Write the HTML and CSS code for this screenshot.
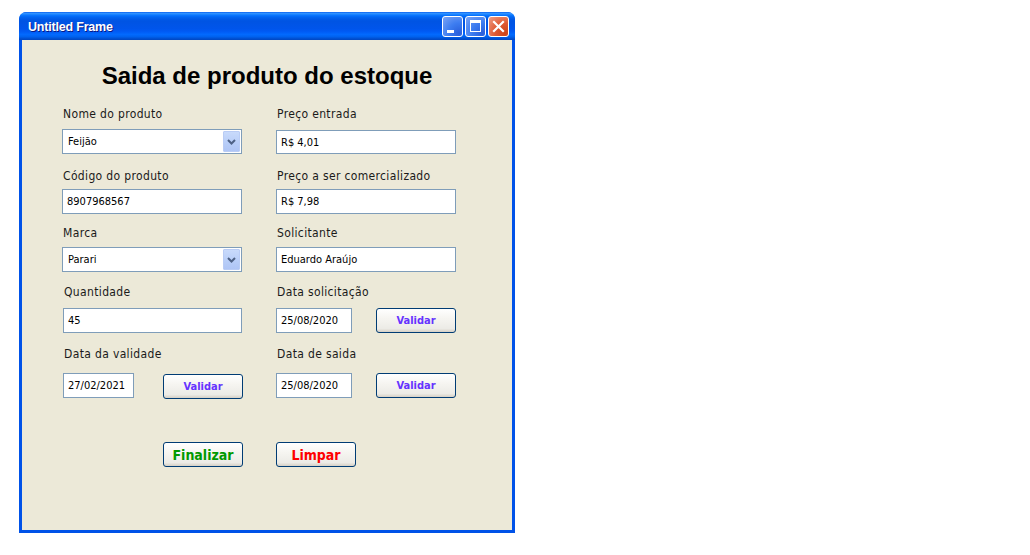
FILE: index.html
```html
<!DOCTYPE html>
<html lang="pt">
<head>
<meta charset="utf-8">
<title>Untitled Frame</title>
<link rel="stylesheet" href="styles.css">
</head>
<body>
<div class="window">
  <div class="titlebar">
    <span class="title">Untitled Frame</span>
    <div class="controls">
      <span class="ctl ctl-min"><svg width="19" height="19" viewBox="0 0 19 19"><rect x="4" y="13" width="7" height="3" fill="#fff"/></svg></span>
      <span class="ctl ctl-max"><svg width="19" height="19" viewBox="0 0 19 19"><rect x="4" y="3" width="11" height="3" fill="#fff"/><rect x="4.5" y="3.5" width="10" height="11" fill="none" stroke="#fff"/></svg></span>
      <span class="ctl ctl-close"><svg width="19" height="19" viewBox="0 0 19 19"><path d="M5 5 L14 14 M14 5 L5 14" stroke="#fff" stroke-width="2.2" stroke-linecap="square"/></svg></span>
    </div>
  </div>
  <div class="content">
    <h1 class="heading">Saida de produto do estoque</h1>
    <div class="form">
      <label class="lbl">Nome do produto</label>
      <label class="lbl">Preço entrada</label>
      <div class="combo"><span class="combo-text">Feijão</span><span class="combo-btn"><svg width="9" height="6" viewBox="0 0 9 6"><path d="M1 1 L4.5 4.5 L8 1" fill="none" stroke="#4D6185" stroke-width="2"/></svg></span></div>
      <div class="field field-r">R$ 4,01</div>

      <label class="lbl">Código do produto</label>
      <label class="lbl">Preço a ser comercializado</label>
      <div class="field">8907968567</div>
      <div class="field">R$ 7,98</div>

      <label class="lbl">Marca</label>
      <label class="lbl">Solicitante</label>
      <div class="combo"><span class="combo-text">Parari</span><span class="combo-btn"><svg width="9" height="6" viewBox="0 0 9 6"><path d="M1 1 L4.5 4.5 L8 1" fill="none" stroke="#4D6185" stroke-width="2"/></svg></span></div>
      <div class="field">Eduardo Araújo</div>

      <label class="lbl lbl-in">Quantidade</label>
      <label class="lbl">Data solicitação</label>
      <div class="field field-in">45</div>
      <div class="daterow">
        <div class="field date">25/08/2020</div>
        <button class="btn btn-validar">Validar</button>
      </div>

      <label class="lbl lbl-in">Data da validade</label>
      <label class="lbl">Data de saida</label>
      <div class="daterow daterow-l">
        <div class="field date date-l">27/02/2021</div>
        <button class="btn btn-validar">Validar</button>
      </div>
      <div class="daterow">
        <div class="field date">25/08/2020</div>
        <button class="btn btn-validar">Validar</button>
      </div>
    </div>
    <div class="actions">
      <button class="btn btn-big btn-finalizar">Finalizar</button>
      <button class="btn btn-big btn-limpar">Limpar</button>
    </div>
  </div>
</div>
</body>
</html>
```
FILE: styles.css
```css
* { box-sizing: border-box; }

body {
  margin: 0;
  background: #ffffff;
}

.window {
  margin: 12px 0 0 19px;
  width: 496px;
  height: 521px;
  background: #0052E8;
  border-radius: 8px 8px 0 0;
  display: flex;
  flex-direction: column;
}

.titlebar {
  flex: none;
  height: 28px;
  display: flex;
  align-items: center;
  padding: 1px 6px 0 9px;
  border-radius: 7px 7px 0 0;
  background: linear-gradient(to bottom,
    #0058EE 0%, #3593FF 4%, #288EFF 7%, #127DFF 10%, #036FFC 14%,
    #0262EE 20%, #0057E5 28%, #0054E3 34%, #0055EB 60%, #005BF5 70%,
    #026AFE 80%, #0062EF 88%, #0052D6 94%, #0046C0 100%);
}

.title {
  flex: 1;
  color: #ffffff;
  font-family: "Liberation Sans", Arial, sans-serif;
  font-weight: bold;
  font-size: 12.5px;
  letter-spacing: -0.2px;
  text-shadow: 1px 1px #0A1883;
}

.controls {
  display: flex;
  gap: 2px;
}

.ctl {
  width: 21px;
  height: 21px;
  border: 1px solid #ffffff;
  border-radius: 3px;
  display: block;
}

.ctl svg { display: block; }

.ctl-min, .ctl-max {
  background: radial-gradient(circle at 85% 85%, #2A5FDB 0%, #3C7CF0 45%, #7BA4F5 100%);
}

.ctl-close {
  background: radial-gradient(circle at 85% 85%, #CC4419 0%, #E05A33 45%, #EE9F88 100%);
}

.content {
  flex: 1;
  margin: 0 3px 3px;
  background: #ECE9D8;
  padding: 22px 0 0 40px;
}

.heading {
  margin: 0 0 0 -40px;
  text-align: center;
  font-family: "Liberation Sans", Arial, sans-serif;
  font-weight: bold;
  font-size: 24px;
  line-height: 28px;
  color: #000000;
}

.form {
  margin-top: 17px;
  display: grid;
  grid-template-columns: 180px 180px;
  column-gap: 34px;
  grid-template-rows: 22px 40px 20px 37px 21px 38px 23px 39px 26px;
  align-items: start;
}

.lbl {
  display: block;
  font-family: "DejaVu Sans Condensed", "DejaVu Sans", sans-serif;
  font-stretch: condensed;
  font-size: 12px;
  line-height: 14px;
  letter-spacing: 0.35px;
  color: #1a1a1a;
  padding-left: 1px;
}

.lbl-in { padding-left: 2px; }

.field, .combo {
  height: 25px;
  background: #ffffff;
  border: 1px solid #7F9DB9;
  font-family: "DejaVu Sans Condensed", "DejaVu Sans", sans-serif;
  font-stretch: condensed;
  font-size: 11px;
  color: #000000;
  display: flex;
  align-items: center;
  padding-left: 4px;
  white-space: nowrap;
}

.field-r { margin-top: 1px; height: 24px; }
.field-in { margin-left: 1px; }

.combo {
  padding: 1px 1px 1px 5px;
}

.combo-text { flex: 1; }

.combo-btn {
  width: 17px;
  height: 21px;
  border: 1px solid #B9CCF5;
  border-radius: 1px;
  background: linear-gradient(to bottom, #C8DAFB 0%, #B7CDF8 60%, #AFC5F5 100%);
  display: flex;
  align-items: center;
  justify-content: center;
}

.combo-btn svg { display: block; }

.daterow {
  display: flex;
  justify-content: space-between;
  align-items: start;
}

.daterow-l { margin-left: 1px; width: 180px; }

.date { width: 76px; }
.date-l { width: 71px; }

.btn {
  width: 80px;
  height: 25px;
  border: 1px solid #003C74;
  border-radius: 3px;
  background: linear-gradient(to bottom, #FFFFFF 0%, #F6F5F1 40%, #ECEBE6 85%, #D6D0C5 100%);
  font-family: "DejaVu Sans Condensed", "DejaVu Sans", sans-serif;
  font-stretch: condensed;
  font-weight: bold;
  padding: 0;
  margin: 0;
}

.btn-validar {
  font-size: 11px;
  color: #6633FF;
}

.daterow-l .btn-validar { margin-top: 1px; }

.actions {
  margin-top: 43px;
  display: grid;
  grid-template-columns: 181px 180px;
  column-gap: 33px;
}

.btn-big {
  font-size: 14px;
}

.btn-finalizar {
  justify-self: end;
  color: #009900;
}

.btn-limpar {
  justify-self: start;
  color: #FF0000;
}
```
